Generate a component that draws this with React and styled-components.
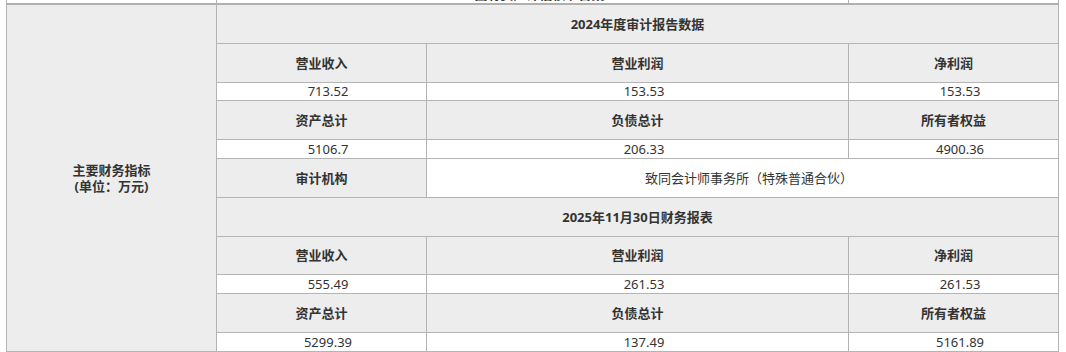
import React from "react";
import styled, { createGlobalStyle } from "styled-components";

const GlobalStyle = createGlobalStyle`
  html, body {
    margin: 0;
    padding: 0;
    background: #fff;
  }
  body {
    font-family: "Noto Sans", "Noto Sans CJK SC", sans-serif;
    color: #333;
  }
`;

const Page = styled.div`
  width: 1066px;
  height: 352px;
  overflow: hidden;
  padding-left: 6px;
  box-sizing: border-box;
`;

const Table = styled.table`
  border-collapse: collapse;
  table-layout: fixed;
  width: 1053px;
  margin-top: -16px;
  font-size: 13px;
  td {
    border: 1px solid #b4b4b4;
    padding: 0;
    text-align: center;
    vertical-align: middle;
    line-height: 16px;
    overflow: hidden;
    white-space: nowrap;
  }
`;

const TopRow = styled.tr`
  td {
    height: 16px;
    border-bottom: 2px solid #b0b0b0;
    background: #fff;
    font-weight: 700;
    vertical-align: bottom;
    line-height: 13px;
    padding-left: 14px;
    padding-bottom: 2px;
  }
`;

const Label = styled.td`
  background: #ededed;
  font-weight: 700;
  && {
    white-space: normal;
    line-height: 16px;
  }
`;

const Head = styled.td`
  background: #ededed;
  font-weight: 700;
  height: 37.8px;
`;

const Value = styled.td`
  background: #fff;
  height: ${(p) => (p.$tall ? 37.8 : 17.8)}px;
  && {
    padding-left: 13px;
  }
`;

const report2024 = {
  title: "2024年度审计报告数据",
  rows: [
    { heads: ["营业收入", "营业利润", "净利润"], values: ["713.52", "153.53", "153.53"] },
    { heads: ["资产总计", "负债总计", "所有者权益"], values: ["5106.7", "206.33", "4900.36"] },
  ],
};

const report2025 = {
  title: "2025年11月30日财务报表",
  rows: [
    { heads: ["营业收入", "营业利润", "净利润"], values: ["555.49", "261.53", "261.53"] },
    { heads: ["资产总计", "负债总计", "所有者权益"], values: ["5299.39", "137.49", "5161.89"] },
  ],
};

const Block = ({ rows }) =>
  rows.map((r, i) => (
    <React.Fragment key={i}>
      <tr>
        {r.heads.map((h) => (
          <Head key={h}>{h}</Head>
        ))}
      </tr>
      <tr>
        {r.values.map((v, j) => (
          <Value key={j}>{v}</Value>
        ))}
      </tr>
    </React.Fragment>
  ));

export default function App() {
  return (
    <Page>
      <GlobalStyle />
      <Table>
        <colgroup>
          <col style={{ width: 210 }} />
          <col style={{ width: 210 }} />
          <col style={{ width: 422 }} />
          <col style={{ width: 210 }} />
        </colgroup>
        <tbody>
          <TopRow>
            <td></td>
            <td colSpan={2}>国有资产评估核准备案</td>
            <td></td>
          </TopRow>
          <tr>
            <Label rowSpan={11}>
              主要财务指标
              <br />
              (单位：万元)
            </Label>
            <Head colSpan={3}>{report2024.title}</Head>
          </tr>
          <Block rows={report2024.rows} />
          <tr>
            <Head>审计机构</Head>
            <Value colSpan={2} $tall>
              致同会计师事务所（特殊普通合伙）
            </Value>
          </tr>
          <tr>
            <Head colSpan={3}>{report2025.title}</Head>
          </tr>
          <Block rows={report2025.rows} />
        </tbody>
      </Table>
    </Page>
  );
}
